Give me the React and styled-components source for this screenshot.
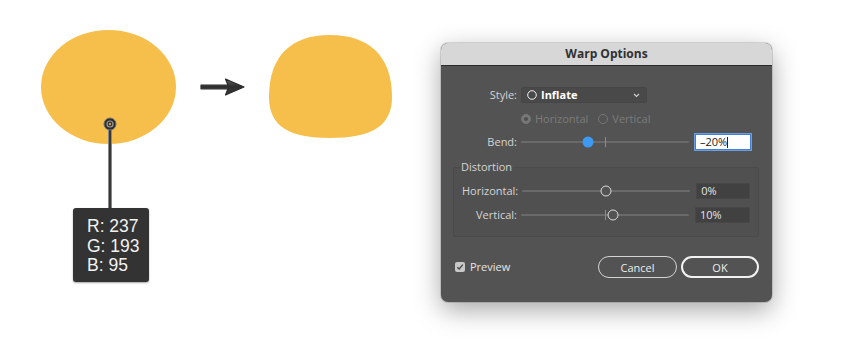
import React from 'react'
import styled, { createGlobalStyle } from 'styled-components'

const GlobalStyle = createGlobalStyle`
  html, body {
    margin: 0;
    background: #ffffff;
  }
  body {
    font-family: 'Open Sans', 'Liberation Sans', sans-serif;
  }
`

const YELLOW = '#F6BF4B'

const Page = styled.div`
  display: flex;
  align-items: flex-start;
  width: 850px;
  height: 359px;
  overflow: hidden;
`

const Artboard = styled.div`
  position: relative;
  flex: 0 0 441px;
  height: 359px;

  svg {
    display: block;
  }
`

const Readout = styled.div`
  position: absolute;
  left: 73px;
  top: 208px;
  width: 76px;
  height: 74px;
  box-sizing: border-box;
  padding: 9px 0 0 14px;
  background: #333333;
  border-radius: 3px;
  box-shadow: 0 1px 2px rgba(0, 0, 0, 0.35);
  color: #f2f2f2;
  font-family: 'Liberation Sans', Arial, sans-serif;
  font-size: 17.5px;
  white-space: nowrap;
`

const ReadoutLine = styled.div`
  height: 19.5px;
  line-height: 19.5px;
`

const Dialog = styled.div`
  flex: 0 0 331px;
  margin-top: 43px;
  border-radius: 7px;
  overflow: hidden;
  background: #535353;
  box-shadow: 0 8px 26px rgba(0, 0, 0, 0.35), 0 0 0 1px rgba(0, 0, 0, 0.12);
  color: #d6d6d6;
  font-size: 11px;
  line-height: 16px;
`

const TitleBar = styled.div`
  height: 22px;
  line-height: 22px;
  text-align: center;
  background: #d7d7d7;
  border-bottom: 1px solid #2c2c2c;
  color: #303030;
  font-size: 12px;
  font-weight: 700;
`

const Body = styled.div`
  display: flex;
  flex-direction: column;
  padding: 21px 13px 24px 12px;
`

const Row = styled.div`
  display: flex;
  align-items: center;
  height: 16px;
  margin-top: ${p => p.$gap || 0}px;
`

const Label = styled.span`
  flex: 0 0 ${p => p.$w}px;
  margin-right: 4px;
  text-align: right;
  white-space: nowrap;
  color: #d4d4d4;
`

const Select = styled.div`
  display: flex;
  align-items: center;
  width: 126px;
  height: 16px;
  box-sizing: border-box;
  padding: 0 6px 0 5px;
  background: #494949;
  border: 1px solid #464646;
  border-radius: 2px;
  color: #ffffff;
  font-weight: 700;

  span {
    flex: 1;
    margin-left: 4px;
  }
`

const RadioGroup = styled.div`
  display: flex;
  align-items: center;
  gap: 6px;
  height: 16px;
  margin-top: 8px;
  padding-left: 68px;
  color: #7b7b7b;
`

const RadioItem = styled.label`
  display: flex;
  align-items: center;
  gap: 4px;
  margin-right: 4px;
`

const Radio = styled.span`
  width: 10px;
  height: 10px;
  box-sizing: border-box;
  border-radius: 50%;
  border: 1px solid #777777;
  background: ${p => (p.$on ? '#777777' : 'transparent')};
  display: flex;
  align-items: center;
  justify-content: center;

  &::after {
    content: '';
    width: 4px;
    height: 4px;
    border-radius: 50%;
    background: ${p => (p.$on ? '#4e4e4e' : 'transparent')};
  }
`

const Track = styled.div`
  position: relative;
  flex: 0 0 168px;
  height: 16px;

  &::before {
    content: '';
    position: absolute;
    left: 0;
    right: 0;
    top: 7px;
    height: 2px;
    background: #6a6a6a;
    border-radius: 1px;
  }
`

const Tick = styled.span`
  position: absolute;
  left: 50%;
  top: 3px;
  width: 1px;
  height: 10px;
  background: #8c8c8c;
`

const Knob = styled.span`
  position: absolute;
  top: 50%;
  width: 11px;
  height: 11px;
  box-sizing: border-box;
  border-radius: 50%;
  transform: translate(-50%, -50%);
  background: ${p => (p.$active ? '#3d9af3' : '#535353')};
  border: ${p => (p.$active ? 'none' : '1.5px solid #dcdcdc')};
`

const ValueBox = styled.div`
  display: flex;
  align-items: center;
  width: 56px;
  height: 16px;
  box-sizing: border-box;
  margin-left: 6px;
  padding-left: 4px;
  background: ${p => (p.$focus ? '#ffffff' : '#414141')};
  border: 1px solid ${p => (p.$focus ? '#3f7fd8' : '#474747')};
  box-shadow: ${p => (p.$focus ? '0 0 0 1px #6c9ee0' : 'none')};
  color: ${p => (p.$focus ? '#222222' : '#e4e4e4')};
`

const Caret = styled.span`
  width: 1px;
  height: 11px;
  background: #222222;
`

const Group = styled.fieldset`
  margin: 10px 0 0;
  padding: 9px 8px 13px;
  min-width: 0;
  border: 1px solid #4b4b4b;
  border-radius: 2px;
  background: rgba(0, 0, 0, 0.03);

  & > ${Row} + ${Row} {
    margin-top: 8px;
  }
`

const Legend = styled.legend`
  padding: 0 2px 0 0;
  margin-left: -1px;
  line-height: 14px;
  color: #d4d4d4;
`

const Footer = styled.div`
  display: flex;
  align-items: center;
  margin-top: 19px;
  height: 22px;
`

const Check = styled.span`
  display: flex;
  align-items: center;
  justify-content: center;
  width: 10px;
  height: 10px;
  margin: 0 5px 0 2px;
  border-radius: 2px;
  background: #c8c8c8;
`

const CheckText = styled.span`
  flex: 1;
  color: #e6e6e6;
  font-size: 11px;
`

const Button = styled.button`
  width: ${p => (p.$primary ? 78 : 79)}px;
  height: 22px;
  margin-left: ${p => (p.$primary ? 4 : 0)}px;
  box-sizing: border-box;
  border-radius: 11px;
  border: ${p => (p.$primary ? '2px solid #f2f2f2' : '1px solid #d4d4d4')};
  background: transparent;
  color: #ececec;
  font-family: inherit;
  font-size: 11px;
  padding: 0;
`

const sliderPos = v => `${((v + 100) / 200) * 100}%`

function Slider({ value, active, tick = true }) {
  return (
    <Track>
      {tick && <Tick />}
      <Knob $active={active} style={{ left: sliderPos(value) }} />
    </Track>
  )
}

function Artwork() {
  return (
    <svg width="441" height="359" viewBox="0 0 441 359">
      <defs>
        <linearGradient id="arrowShade" x1="0" y1="0" x2="0" y2="1">
          <stop offset="0" stopColor="#6a6a6a" />
          <stop offset="0.45" stopColor="#2e2e2e" />
          <stop offset="1" stopColor="#3a3a3a" />
        </linearGradient>
      </defs>
      <ellipse cx="108.5" cy="87" rx="67.5" ry="57" fill={YELLOW} />
      <line x1="110" y1="126" x2="110" y2="210" stroke="#8a8a8a" strokeWidth="4" />
      <line x1="110" y1="126" x2="110" y2="210" stroke="#383838" strokeWidth="2" />
      <circle cx="110" cy="124" r="6" fill="#2e2e2e" stroke="#6e6e6e" strokeWidth="1" />
      <circle cx="110" cy="124" r="3" fill="none" stroke="#9a9a9a" strokeWidth="1.2" />
      <circle cx="110" cy="124" r="1.2" fill="#c9a25a" />
      <path
        d="M201 85.2 L228 85.2 L225.5 79 L244 87 L225.5 95 L228 88.8 L201 88.8 Z"
        fill="url(#arrowShade)"
        stroke="#2a2a2a"
        strokeWidth="1.2"
        strokeLinejoin="round"
      />
      <path
        d="M269 97 C269 55 292 35 330 35 C368 35 392 55 392 97 C392 127 370 138 330 138 C290 138 269 127 269 97 Z"
        fill={YELLOW}
      />
    </svg>
  )
}

export default function App() {
  return (
    <>
      <GlobalStyle />
      <Page>
        <Artboard>
          <Artwork />
          <Readout>
            <ReadoutLine>R: 237</ReadoutLine>
            <ReadoutLine>G: 193</ReadoutLine>
            <ReadoutLine>B: 95</ReadoutLine>
          </Readout>
        </Artboard>

        <Dialog>
          <TitleBar>Warp Options</TitleBar>
          <Body>
            <Row>
              <Label $w={64}>Style:</Label>
              <Select>
                <svg width="10" height="10" viewBox="0 0 10 10">
                  <circle cx="5" cy="5" r="4.3" fill="none" stroke="#f0f0f0" strokeWidth="1" />
                </svg>
                <span>Inflate</span>
                <svg width="7" height="5" viewBox="0 0 7 5">
                  <path d="M1 1 L3.5 3.5 L6 1" fill="none" stroke="#cfcfcf" strokeWidth="1.1" />
                </svg>
              </Select>
            </Row>

            <RadioGroup>
              <RadioItem>
                <Radio $on />
                Horizontal
              </RadioItem>
              <RadioItem>
                <Radio />
                Vertical
              </RadioItem>
            </RadioGroup>

            <Row $gap={7}>
              <Label $w={64}>Bend:</Label>
              <Slider value={-20} active />
              <ValueBox $focus>
                –20%
                <Caret />
              </ValueBox>
            </Row>

            <Group>
              <Legend>Distortion</Legend>
              <Row>
                <Label $w={55}>Horizontal:</Label>
                <Slider value={0} tick={false} />
                <ValueBox>0%</ValueBox>
              </Row>
              <Row>
                <Label $w={55}>Vertical:</Label>
                <Slider value={10} />
                <ValueBox>10%</ValueBox>
              </Row>
            </Group>

            <Footer>
              <Check>
                <svg width="8" height="8" viewBox="0 0 8 8">
                  <path d="M1.3 4.2 L3.2 6 L6.8 1.6" fill="none" stroke="#4a4a4a" strokeWidth="1.4" />
                </svg>
              </Check>
              <CheckText>Preview</CheckText>
              <Button>Cancel</Button>
              <Button $primary>OK</Button>
            </Footer>
          </Body>
        </Dialog>
      </Page>
    </>
  )
}
